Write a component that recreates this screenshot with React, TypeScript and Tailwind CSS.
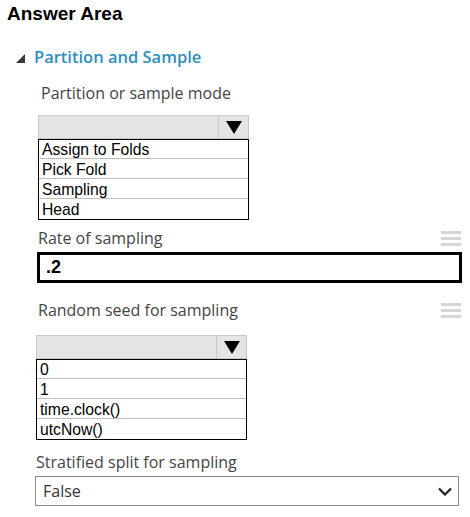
import React from "react";

const sans = "font-['Open_Sans','Noto_Sans',sans-serif]";
const arial = "font-['Liberation_Sans',Arial,sans-serif]";

function Hamburger() {
  return (
    <div className="flex flex-col gap-[3px] w-[20px]">
      <div className="h-[3px] bg-[#d6d6d6]" />
      <div className="h-[3px] bg-[#d6d6d6]" />
      <div className="h-[3px] bg-[#d6d6d6]" />
    </div>
  );
}

function DropList({ items, className }: { items: string[]; className: string }) {
  return (
    <div className={`w-[211px] ${className}`}>
      <div className="h-[24px] flex border border-[#c8c8c8] bg-[#e4e4e4]">
        <div className="flex-1" />
        <div className="w-[30px] border-l border-[#c8c8c8] flex items-center justify-center">
          <svg width="16" height="13" viewBox="0 0 16 13">
            <polygon points="0,0 16,0 8,13" fill="#000" />
          </svg>
        </div>
      </div>
      <div className={`border border-black divide-y divide-[#bdbdbd] ${arial} text-[15.7px] text-black`}>
        {items.map((it) => (
          <div key={it} className="leading-[19px] pt-[1px] h-[20px] first:h-[19px] first:pt-0 pl-[3px]">
            {it}
          </div>
        ))}
      </div>
    </div>
  );
}

export default function App() {
  return (
    <div className="w-[470px] h-[517px] bg-white overflow-hidden">
      <div className={`h-[45px] pt-[3px] pl-[7px] ${arial} font-bold text-[19px] leading-[22px] text-black`}>
        Answer Area
      </div>
      <div className="h-[24px] flex items-center pl-[16px]">
        <svg width="9" height="9" viewBox="0 0 9 9" className="mt-[2px]">
          <polygon points="0,9 9,9 9,0" fill="#3a3a3a" />
        </svg>
        <span className={`ml-[9px] ${sans} font-semibold text-[16.5px] leading-[24px] text-[#2e8fbf]`}>
          Partition and Sample
        </span>
      </div>
      <div className={`mt-[14px] h-[20px] pl-[41px] ${sans} text-[16px] leading-[20px] text-[#444]`}>
        Partition or sample mode
      </div>
      <DropList className="mt-[12px] ml-[38px]" items={["Assign to Folds", "Pick Fold", "Sampling", "Head"]} />
      <div className="mt-[8px] h-[20px] flex items-center justify-between pl-[38px] pr-[9px]">
        <span className={`${sans} text-[16px] leading-[20px] text-[#444]`}>Rate of sampling</span>
        <Hamburger />
      </div>
      <div className={`mt-[4px] ml-[37px] w-[425px] h-[31px] border-[3px] border-black flex items-center pl-[6px] ${arial} font-bold text-[18px] text-black`}>
        .2
      </div>
      <div className="mt-[17px] h-[20px] flex items-center justify-between pl-[38px] pr-[9px]">
        <span className={`${sans} text-[16px] leading-[20px] text-[#444]`}>Random seed for sampling</span>
        <Hamburger />
      </div>
      <DropList className="mt-[15px] ml-[36px]" items={["0", "1", "time.clock()", "utcNow()"]} />
      <div className={`mt-[12px] h-[20px] pl-[36px] ${sans} text-[16px] leading-[20px] text-[#444]`}>
        Stratified split for sampling
      </div>
      <div className="mt-[4px] ml-[35px] w-[424px] h-[30px] border border-[#8c8c8c] flex items-center justify-between pl-[7px] pr-[6px]">
        <span className={`${sans} text-[16px] text-[#333]`}>False</span>
        <svg width="14" height="9" viewBox="0 0 14 9">
          <polyline points="1,1.5 7,7.5 13,1.5" fill="none" stroke="#222" strokeWidth="2.2" />
        </svg>
      </div>
    </div>
  );
}
